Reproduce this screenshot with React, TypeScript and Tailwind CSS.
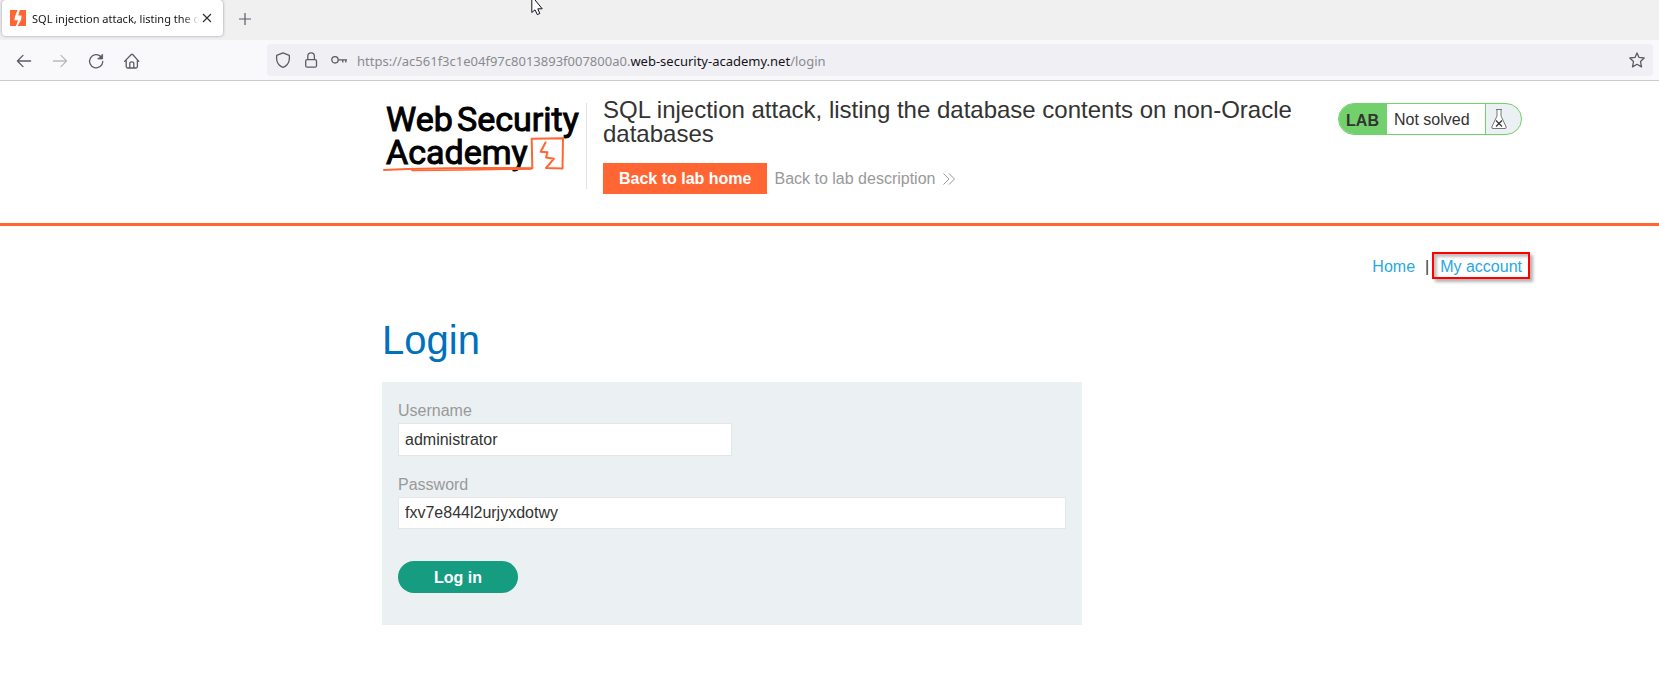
import React from "react";

function BoltMark() {
  return (
    <svg className="size-4 shrink-0" viewBox="0 0 16 16" aria-hidden="true">
      <rect width="16" height="16" fill="#ff6633" />
      <path d="M7.6 0H9.8L8.2 5.6H11.6L11.2 9.4L7.6 16H6L8 10.2H4.4L5 6.2Z" fill="#fff" />
    </svg>
  );
}

function TabStrip() {
  return (
    <div className="flex h-10 items-start bg-[#f0f0f0] pl-[2px]">
      <div className="flex h-9 w-[221px] items-center rounded-[4px] bg-white pl-2 pr-[10px] shadow-[0_0_3px_rgba(90,90,110,0.6)]">
        <BoltMark />
        <div className="ml-[6px] min-w-0 flex-1 overflow-hidden whitespace-nowrap pt-px text-[11px] leading-4 text-[#15141a] [mask-image:linear-gradient(to_right,black_90%,transparent)]">
          SQL injection attack, listing the database contents
        </div>
        <button type="button" aria-label="Close tab" className="ml-[2px] flex size-3 items-center justify-center">
          <svg className="size-[10px]" viewBox="0 0 10 10" fill="none" stroke="#2b2a33" strokeWidth="1.1" aria-hidden="true">
            <path d="M1 1L9 9M9 1L1 9" />
          </svg>
        </button>
      </div>
      <button type="button" aria-label="New tab" className="ml-[14px] flex h-9 w-4 items-center justify-center pt-px">
        <svg className="size-4" viewBox="0 0 16 16" fill="none" stroke="#5b5b66" strokeWidth="1.2" aria-hidden="true">
          <path d="M8 2V14M2 8H14" />
        </svg>
      </button>
    </div>
  );
}

function ToolButton({ label, faded, children }: { label: string; faded?: boolean; children: React.ReactNode }) {
  return (
    <button type="button" aria-label={label} className={faded ? "size-4 opacity-40" : "size-4"}>
      <svg
        className="size-4 overflow-visible"
        viewBox="0 0 16 16"
        fill="none"
        stroke="#5b5b66"
        strokeWidth="1.3"
        strokeLinecap="round"
        strokeLinejoin="round"
        aria-hidden="true"
      >
        {children}
      </svg>
    </button>
  );
}

function Toolbar() {
  return (
    <div className="flex h-[41px] items-center border-b border-[#cccccc] bg-[#f9f9fb] pr-[6px]">
      <div className="flex w-[267px] shrink-0 gap-5 pl-4 pt-px">
        <ToolButton label="Back">
          <path d="M14.6 8H1.4M7 2.4L1.4 8L7 13.6" />
        </ToolButton>
        <ToolButton label="Forward" faded>
          <path d="M1.4 8H14.6M9 2.4L14.6 8L9 13.6" />
        </ToolButton>
        <ToolButton label="Reload">
          <path d="M14.8 8.5A6.6 6.6 0 1 1 12.8 3.5" />
          <path d="M14.6 1.4V6H10Z" fill="#5b5b66" strokeWidth="0.8" />
        </ToolButton>
        <ToolButton label="Home">
          <path d="M0.600 8.4L7.3 1.5Q8 0.9 8.7 1.5L14.800 8.4M2.2 6.9V13.5Q2.2 15 3.600 15H12Q13.4 15 13.4 13.5V6.9M5.800 15V10.500Q5.800 8.800 7.800 8.800T9.800 10.500V15" />
        </ToolButton>
      </div>
      <div className="flex h-8 min-w-0 flex-1 items-center rounded-[4px] bg-[#f0f0f4] px-2">
        <svg className="size-4 shrink-0" viewBox="0 0 16 16" fill="none" stroke="#5b5b66" strokeWidth="1.3" strokeLinejoin="round" aria-hidden="true">
          <path d="M8 0.8L14.3 3.4Q15 9.5 12 12.8Q10.2 14.7 8 15.3Q5.8 14.7 4 12.8Q1 9.5 1.7 3.4Z" />
        </svg>
        <svg className="ml-3 size-4 shrink-0" viewBox="0 0 16 16" fill="none" stroke="#5b5b66" strokeWidth="1.3" aria-hidden="true">
          <rect x="2.7" y="7.6" width="10.8" height="7.6" rx="1.5" />
          <path d="M4.8 7.6V4.2Q4.8 0.9 8.1 0.9T11.4 4.2V7.6" />
        </svg>
        <svg className="ml-3 size-4 shrink-0" viewBox="0 0 16 16" fill="none" stroke="#5b5b66" strokeWidth="1.3" aria-hidden="true">
          <circle cx="4" cy="7.8" r="3.2" />
          <path d="M7.2 7.8H16M11.8 7.8V10.6M14.8 7.8V10.6" />
        </svg>
        <div className="ml-[10px] min-w-0 flex-1 truncate pt-px text-[13px] leading-5 text-[#8a8a90]">
          https://ac561f3c1e04f97c8013893f007800a0.<span className="text-[#15141a]">web-security-academy.net</span>/login
        </div>
        <button type="button" aria-label="Bookmark this page" className="size-4 shrink-0">
          <svg className="size-4" viewBox="0 0 16 16" fill="none" stroke="#5b5b66" strokeWidth="1.3" strokeLinejoin="round" aria-hidden="true">
            <path d="M8 0.9L10 5.4L15.2 6L11.5 9.5L12.5 14.9L8 12.3L3.5 14.9L4.5 9.5L0.8 6L6 5.4Z" />
          </svg>
        </button>
      </div>
    </div>
  );
}

function AcademyLogo() {
  return (
    <svg className="h-[70px] w-[200px] shrink-0 overflow-visible" viewBox="0 0 200 70" role="img" aria-label="Web Security Academy">
      <g fill="#000" stroke="#000" strokeWidth="1" fontFamily="Roboto, sans-serif" fontSize="34" fontWeight="400">
        <text x="4" y="28">Web</text>
        <text x="75" y="28">Security</text>
        <text x="4" y="61">Academy</text>
      </g>
      <g fill="none" stroke="#ff6633" strokeLinejoin="round" strokeLinecap="round" strokeWidth="2">
        <path d="M2 67Q60 64.500 150.300 65.200L149.700 35.700L181 35.200L180.500 65.500L164 65L172 55.700L164 54.500L165.500 49.300L158.700 48.700L163.500 39.500" />
        <path d="M30 67.400Q90 67 149 66" strokeWidth="1.500" />
      </g>
    </svg>
  );
}

function LabStatus() {
  return (
    <div className="flex h-8 w-[184px] shrink-0 overflow-hidden rounded-full border border-[#72d16c] bg-[#ebf0f3]">
      <div className="flex w-12 items-center justify-center bg-[#72d16c] pr-px pt-[3px] text-[16px] font-bold text-[#333332]">LAB</div>
      <p className="flex flex-1 items-center border-r border-[#72d16c] bg-white pl-[7px] pt-px text-[16px] text-[#333332]">Not solved</p>
      <div className="flex w-[35px] items-center pl-[5px]">
        <svg className="h-5 w-4" viewBox="0 0 16 20" fill="none" stroke="#777" aria-hidden="true">
          <path d="M5 0.500H11M6 0.500V7L0.800 18Q0.500 19.500 2 19.500H14Q15.500 19.500 15.200 18L10 7V0.500" fill="#fff" strokeWidth="1" />
          <path d="M5 11.500L11 17.500M11 11.500L5 17.500" stroke="#333" strokeWidth="1.200" />
        </svg>
      </div>
    </div>
  );
}

function LabHeader() {
  return (
    <header className="border-b-[3px] border-[#ff6633] px-4 pb-[29px] pt-[22px] xl:pl-[382px] xl:pr-[137px]">
      <div className="flex items-start">
        <div className="h-[86px] w-[205px] shrink-0 border-r border-[#e0e2e4]">
          <AcademyLogo />
        </div>
        <div className="ml-4 min-w-0 flex-1 pr-[45px]">
          <h2 className="-mt-[5px] text-[24px] leading-6 text-[#333332]">
            SQL injection attack, listing the database contents on non-Oracle databases
          </h2>
          <div className="mt-[17px] flex items-center gap-[7px] text-[16px] leading-[31px]">
            <a href="#home" className="bg-[#ff6633] px-4 font-bold text-white">Back to lab home</a>
            <a href="#description" className="flex items-center gap-2 text-[#999999]">
              Back to lab description
              <svg className="h-3 w-3" viewBox="0 0 12 12" fill="none" stroke="#999" strokeWidth="1" aria-hidden="true">
                <path d="M0.500 0.500L6 6L0.500 11.500M6 0.500L11.500 6L6 11.500" />
              </svg>
            </a>
          </div>
        </div>
        <LabStatus />
      </div>
    </header>
  );
}

export default function App() {
  return (
    <div className="min-h-screen bg-white font-['Liberation_Sans',Arial,sans-serif] text-[#333332]">
      <div className="font-['Noto_Sans','Open_Sans',sans-serif]">
        <TabStrip />
        <Toolbar />
      </div>
      <LabHeader />
      <main className="px-4 xl:pl-[382px] xl:pr-[129px]">
        <nav className="flex items-center justify-end pt-[26px] text-[16px] leading-[23px] text-[#29a7df]">
          <a href="#home" className="pt-px">Home</a>
          <span className="ml-[10px] mr-[3px] pt-px text-[#333332]">|</span>
          <a href="#my-account" className="border-2 border-[#ff0000] px-[6px] pt-[2px] leading-[21px] shadow-[3px_3px_3px_rgba(0,0,0,0.3),inset_3px_3px_3px_rgba(0,0,0,0.25)]">My account</a>
        </nav>
        <h1 className="mt-[39px] text-[40px] leading-[44px] text-[#0071bd]">Login</h1>
        <form className="mt-5 max-w-[700px] bg-[#ebf0f3] px-4 pb-8 pt-4 text-[16px]" onSubmit={(e) => e.preventDefault()}>
          <label htmlFor="username" className="block leading-[25px] text-[#999999]">Username</label>
          <input id="username" type="text" defaultValue="administrator" className="block h-[33px] w-1/2 border border-[#e5e5e5] bg-white px-[6px] text-[#333332]" />
          <label htmlFor="password" className="mt-4 block leading-[25px] text-[#999999]">Password</label>
          <input id="password" type="text" defaultValue="fxv7e844l2urjyxdotwy" className="block h-8 w-full border border-[#e5e5e5] bg-white px-[6px] text-[#333332]" />
          <button type="submit" className="mt-8 h-8 w-[120px] rounded-full bg-[#169c80] pt-px font-bold text-white">Log in</button>
        </form>
      </main>
      <svg className="absolute left-[531px] top-0 h-4 w-3" viewBox="0 0 12 16" aria-hidden="true">
        <path d="M0.800 -4V12.500L4 9.800L6.300 14.600L8.800 13.500L6.800 8.800H11.200Z" fill="#fff" stroke="#11112a" strokeWidth="1" />
      </svg>
    </div>
  );
}
